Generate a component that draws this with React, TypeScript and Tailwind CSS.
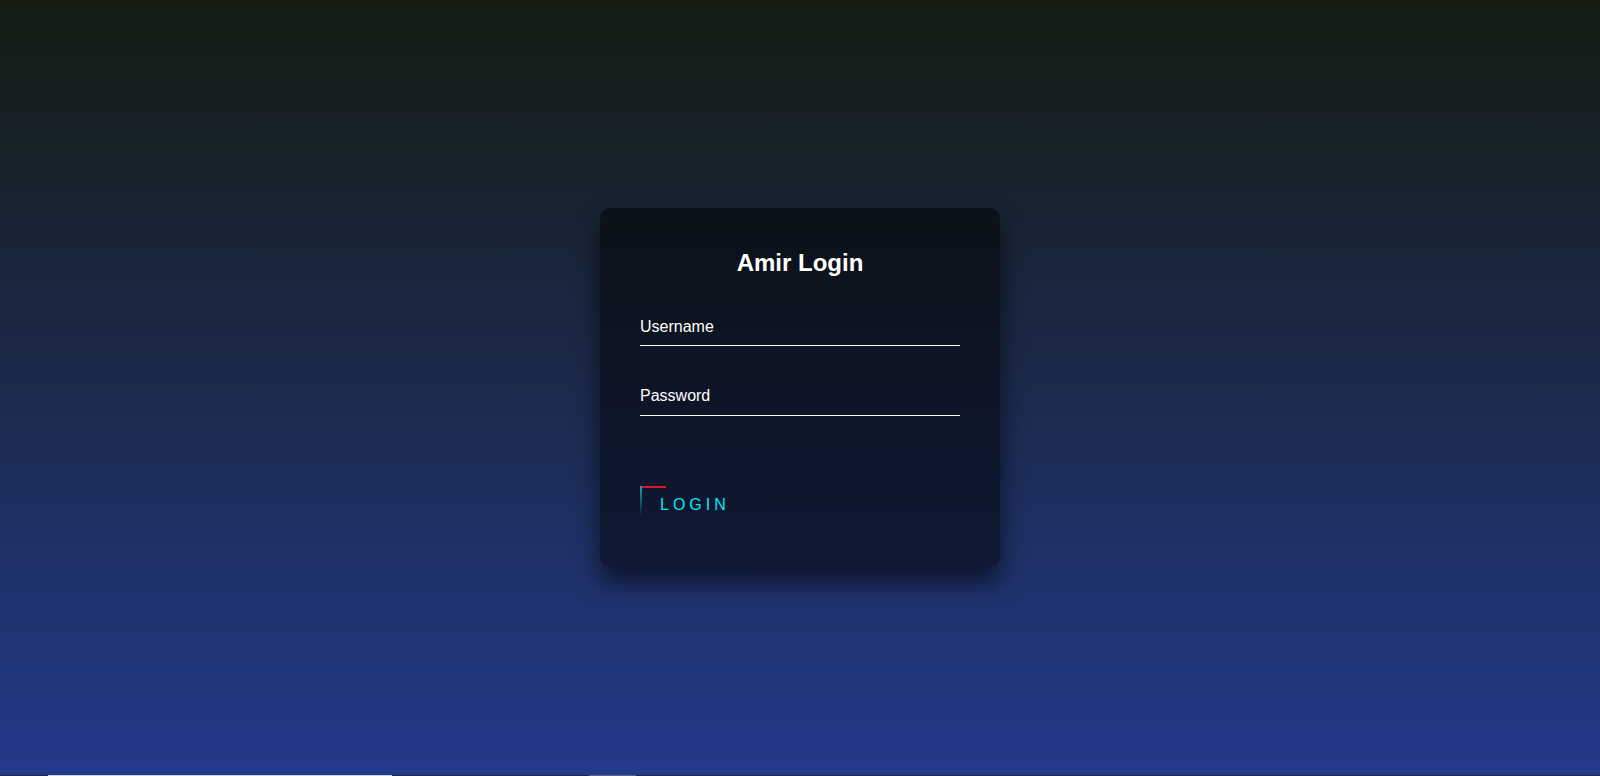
import React from "react";

const App = () => {
  return (
    <div className="flex h-[776px] flex-col font-['Liberation_Sans',Arial,sans-serif]">
      {/* Page background */}
      <main className="flex flex-1 items-center justify-center bg-[linear-gradient(to_bottom,#141c12,#1b2a4c_50%,#23398a)]">
        <div className="w-[400px] rounded-[10px] bg-black/50 px-10 pt-[41px] pb-[36px] shadow-[0_15px_25px_rgba(0,0,0,0.6)]">
          <h2 className="mb-[32px] text-center text-2xl leading-[1.15] font-bold text-white">
            Amir Login
          </h2>
          <form>
            <div className="mb-[31px] border-b border-white pt-2.5 pb-[8px] text-base leading-[1.15] text-white">
              Username
            </div>
            <div className="mb-[30px] border-b border-white py-2.5 text-base leading-[1.15] text-white">
              Password
            </div>
            <a
              href="#"
              className="relative mt-[40px] inline-block overflow-hidden px-5 py-2.5 text-base leading-[1.15] tracking-[4px] text-[#03e9f4] uppercase no-underline"
            >
              {/* animated border snapshot */}
              <span className="absolute top-0 left-px h-[2px] w-[25px] bg-[#e0172b]" />
              <span className="absolute top-0 left-0 h-[30px] w-[2px] bg-[linear-gradient(to_bottom,#1aa3ae,transparent)]" />
              Login
            </a>
          </form>
        </div>
      </main>
      {/* Bottom strip */}
      <div className="flex h-px bg-[#1c2a50]">
        <div className="ml-[48px] w-[344px] bg-[#cdd1e6]" />
        <div className="ml-[197px] w-[47px] bg-[#5a6488]" />
      </div>
    </div>
  );
};

export default App;
